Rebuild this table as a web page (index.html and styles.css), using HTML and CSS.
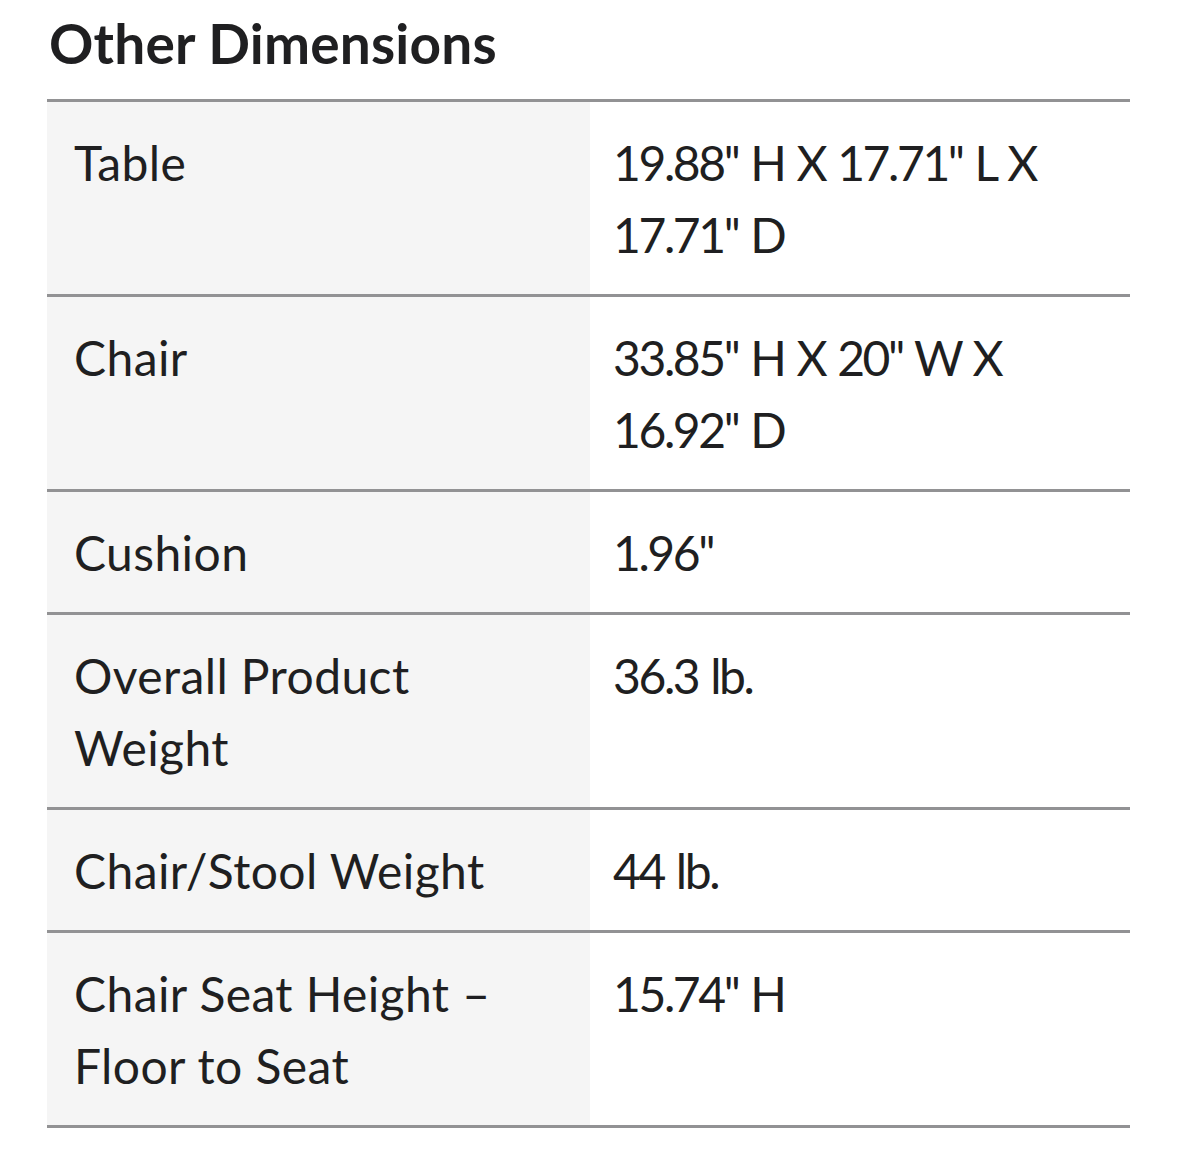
FILE: index.html
```html
<!DOCTYPE html>
<html lang="en">
<head>
<meta charset="utf-8">
<title>Other Dimensions</title>
<link rel="stylesheet" href="styles.css">
</head>
<body>
<section class="dims">
  <h2 class="dims-title">Other Dimensions</h2>
  <table class="dims-table">
    <tbody>
      <tr><th>Table</th><td>19.88'' H X 17.71'' L X 17.71'' D</td></tr>
      <tr><th>Chair</th><td>33.85'' H X 20'' W X 16.92'' D</td></tr>
      <tr><th>Cushion</th><td>1.96''</td></tr>
      <tr><th>Overall Product Weight</th><td>36.3 lb.</td></tr>
      <tr><th>Chair/Stool Weight</th><td>44 lb.</td></tr>
      <tr><th>Chair Seat Height – Floor to Seat</th><td>15.74'' H</td></tr>
    </tbody>
  </table>
</section>
</body>
</html>
```

FILE: styles.css
```css
html, body {
  margin: 0;
  padding: 0;
  background: #ffffff;
}
body {
  font-family: Lato, "Open Sans", sans-serif;
  color: #1f1f21;
}
.dims {
  padding: 0 49px 0 47px;
}
.dims-title {
  margin: 0;
  padding-top: 10px;
  padding-left: 2px;
  height: 99px;
  box-sizing: border-box;
  font-size: 55px;
  line-height: 66px;
  font-weight: 700;
  letter-spacing: 0.2px;
}
.dims-table {
  width: 100%;
  border-collapse: collapse;
  border-top: 3px solid #929294;
}
.dims-table tr {
  border-bottom: 3px solid #929294;
}
.dims-table th,
.dims-table td {
  vertical-align: top;
  text-align: left;
  font-size: 48px;
  line-height: 72px;
  font-weight: 400;
  padding: 25px 24px 23px 27px;
}
.dims-table th {
  width: 543px;
  box-sizing: border-box;
  background: #f5f5f5;
  letter-spacing: 0.4px;
}
.dims-table td {
  padding-left: 23px;
  letter-spacing: -2.4px;
  word-spacing: 2px;
}
```
